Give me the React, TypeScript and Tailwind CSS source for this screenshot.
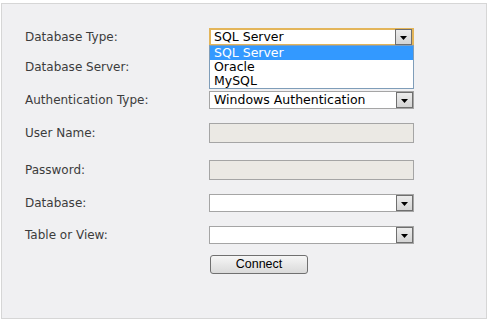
import type { ReactNode } from "react"

const labelFont = "font-['DejaVu_Sans','Verdana',sans-serif]"

function Arrow() {
  return (
    <div className="flex h-[16px] w-[17px] items-end justify-center border border-[#6f6f6f] bg-gradient-to-b from-[#ececec] to-[#d4d4d4] pb-[4px]">
      <svg width="7" height="4" viewBox="0 0 7 4">
        <path d="M0 0h7L3.5 4z" fill="#000" />
      </svg>
    </div>
  )
}

function Select({ value, focused }: { value?: string; focused?: boolean }) {
  return (
    <div
      className={
        focused
          ? "flex h-[18px] w-[205px] items-center justify-between border-2 border-[#e3b55a] bg-white pl-[3px] pr-0"
          : "flex h-[18px] w-[205px] items-center justify-between border border-[#a5a5a5] bg-white pl-[4px] pr-0"
      }
    >
      <span className={`${labelFont} text-[12.5px] leading-none text-black`}>{value}</span>
      <Arrow />
    </div>
  )
}

function Row({ label, className, children }: { label: string; className: string; children?: ReactNode }) {
  return (
    <div className={`flex items-center ${className}`}>
      <div className={`w-[184px] shrink-0 ${labelFont} text-[12px] text-[#3c3c3c]`}>{label}</div>
      {children}
    </div>
  )
}

export default function App() {
  return (
    <div className="h-[322px] w-[489px] bg-white pl-[1px] pt-[3px]">
      <div className="h-[316px] w-[486px] border border-[#d6d6d6] bg-[#f0f0f2] pl-[23px]">
        {/* Database type, opened */}
        <Row label="Database Type:" className="relative z-10 mt-[24px] h-[18px]">
          <div className="relative">
            <Select value="SQL Server" focused />
            <div className="absolute left-0 top-[17px] w-[205px] border border-[#7f9db9] bg-white">
              <div className={`h-[14px] bg-[#3399ff] pl-[4px] ${labelFont} text-[12.5px] leading-[14px] text-white`}>
                SQL Server
              </div>
              <div className={`h-[14px] pl-[4px] ${labelFont} text-[12.5px] leading-[14px] text-black`}>Oracle</div>
              <div className={`h-[14px] pl-[4px] ${labelFont} text-[12.5px] leading-[14px] text-black`}>MySQL</div>
            </div>
          </div>
        </Row>

        <Row label="Database Server:" className="mt-[11px] h-[19px]">
          <div className="h-[19px] w-[205px] border border-[#a5a5a5] bg-white" />
        </Row>

        <Row label="Authentication Type:" className="mt-[15px] h-[18px]">
          <Select value="Windows Authentication" />
        </Row>

        <Row label="User Name:" className="mt-[14px] h-[20px]">
          <div className="h-[20px] w-[205px] border border-[#a5a5a5] bg-[#ebe9e4]" />
        </Row>

        <Row label="Password:" className="mt-[17px] h-[20px]">
          <div className="h-[20px] w-[205px] border border-[#a5a5a5] bg-[#ebe9e4]" />
        </Row>

        <Row label="Database:" className="mt-[14px] h-[18px]">
          <Select />
        </Row>

        <Row label="Table or View:" className="mt-[14px] h-[18px]">
          <Select />
        </Row>

        <div className="mt-[11px] flex pl-[185px]">
          <button className="h-[19px] w-[98px] rounded-[3px] border border-[#707070] bg-gradient-to-b from-[#f6f6f6] to-[#dadada] font-['Liberation_Sans',Arial,sans-serif] text-[12.5px] leading-none text-black">
            Connect
          </button>
        </div>
      </div>
    </div>
  )
}
